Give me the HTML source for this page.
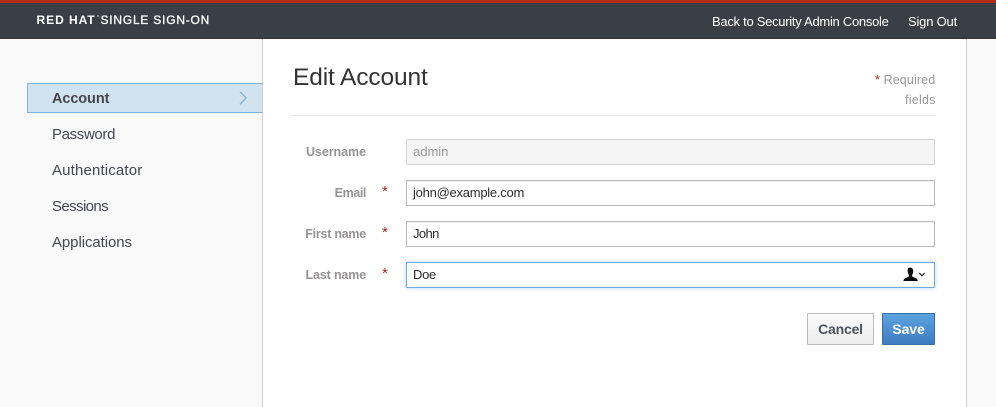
<!DOCTYPE html>
<html>
<head>
<meta charset="utf-8">
<style>
html,body{margin:0;padding:0}
body{width:996px;height:407px;overflow:hidden;position:relative;background:#f9f9f9;font-family:"Liberation Sans",sans-serif;color:#363636}
div,span{position:absolute;white-space:nowrap;box-sizing:border-box}
.top{left:0;top:0;width:996px;height:39px;background:#393f44;border-top:3px solid #b5290f;border-bottom:1px solid #30343a}
.t{line-height:18px}
.nav{left:52px;font-size:15px;color:#44474d;line-height:18px}
.main{left:262px;top:39px;width:705px;height:368px;background:#fff;border-left:1px solid #cfcfcf;border-right:1px solid #d1d1d1}
.lab{font-size:12.5px;font-weight:bold;color:#959393;line-height:16px;text-align:right;width:100px;left:266px;letter-spacing:-.05px}
.star{left:382px;font-size:15px;color:#a4291b;line-height:16px}
.inp{left:406px;width:529px;height:26px;background:#fff;border:1px solid #bababa;border-radius:1px;font-size:13px;line-height:24px;padding-left:6px;color:#2b2b2b;box-shadow:inset 0 1px 1px rgba(0,0,0,.06)}
</style>
</head>
<body>
<div class="top"></div>
<div class="t" style="left:36.5px;top:11px;font-size:12px;font-weight:bold;color:#fff;letter-spacing:.95px">RED HAT</div>
<div style="left:97px;top:15px;width:2px;height:2px;background:#aaa;border-radius:1px"></div>
<div class="t" style="left:100.5px;top:11px;font-size:12px;color:#fff;letter-spacing:.78px;-webkit-text-stroke:.3px #fff">SINGLE SIGN-ON</div>
<div class="t" style="left:712px;top:13px;font-size:13px;color:#fff;letter-spacing:-.28px">Back to Security Admin Console</div>
<div class="t" style="left:908px;top:13px;font-size:13px;color:#fff;letter-spacing:-.2px">Sign Out</div>

<div style="left:27px;top:83px;width:236px;height:30px;background:#d0e3ef;border:1px solid #7db5e0;border-right:0"></div>
<svg style="position:absolute;left:238px;top:91px" width="10" height="14" viewBox="0 0 10 14"><path d="M2 .8 L8.2 7 L2 13.2" fill="none" stroke="#74a9dc" stroke-width="1.1"/></svg>
<div class="nav" style="top:90px;font-weight:bold;font-size:14.5px;letter-spacing:-.1px">Account</div>
<div class="nav" style="top:126px;letter-spacing:-.35px">Password</div>
<div class="nav" style="top:162px;letter-spacing:.15px">Authenticator</div>
<div class="nav" style="top:198px;letter-spacing:-.6px">Sessions</div>
<div class="nav" style="top:234px;letter-spacing:-.08px">Applications</div>

<div class="main"></div>
<div class="t" style="left:293px;top:63px;font-size:24.5px;line-height:30px;color:#333;letter-spacing:-.13px">Edit Account</div>
<div class="t" style="left:875px;top:71px;font-size:12.5px;color:#999;letter-spacing:.12px"><span style="position:static;color:#a4291b">*</span> Required</div>
<div class="t" style="left:905px;top:91px;font-size:12.5px;color:#999;letter-spacing:.25px">fields</div>
<div style="left:293px;top:115px;width:643px;height:1px;background:#e6e6e6"></div>

<div class="lab" style="top:144px">Username</div>
<div class="lab" style="top:185px;letter-spacing:-.4px">Email</div>
<div class="lab" style="top:226px;letter-spacing:-.25px">First name</div>
<div class="lab" style="top:267px;letter-spacing:-.15px">Last name</div>
<div class="star" style="top:184px">*</div>
<div class="star" style="top:225px">*</div>
<div class="star" style="top:266px">*</div>

<div class="inp" style="top:139px;background:#f5f5f5;border-color:#d4d4d4;color:#999;box-shadow:none">admin</div>
<div class="inp" style="top:180px;letter-spacing:-.25px">john@example.com</div>
<div class="inp" style="top:221px;letter-spacing:-.6px">John</div>
<div class="inp" style="top:262px;border-color:#72a9e3;box-shadow:0 0 5px rgba(100,165,230,.45);letter-spacing:-.3px">Doe</div>
<svg style="position:absolute;left:903px;top:267px" width="24" height="16" viewBox="0 0 24 16"><path d="M5 1.2 C7.2 .1 10 .7 10.2 3.6 C10.3 5.6 9.7 7.2 9 8.3 C8.8 9.4 9.8 10 11.2 10.5 C13 11 14.6 11.8 14.8 14 L.4 14 C.6 11.8 2.2 11 4 10.5 C5.2 10 6.2 9.4 6 8.3 C5.3 7.2 4.5 5.6 4.7 3.6 Z" fill="#0c0c0c"/><path d="M16.3 6 L19 8.8 L21.7 6" fill="none" stroke="#222" stroke-width="1.2"/></svg>

<div class="t" style="left:807px;top:313px;width:67px;height:32px;line-height:30px;text-align:center;font-size:14px;font-weight:bold;color:#4d5258;background:linear-gradient(#fafafa,#ededed);border:1px solid #bbb;border-radius:1px;letter-spacing:-.2px">Cancel</div>
<div class="t" style="left:882px;top:313px;width:53px;height:32px;line-height:30px;text-align:center;font-size:14px;font-weight:bold;color:#fff;background:linear-gradient(#5ba3e0,#3f7cc0);border:1px solid #3a6ea6;border-radius:1px;letter-spacing:-.1px">Save</div>
</body>
</html>
